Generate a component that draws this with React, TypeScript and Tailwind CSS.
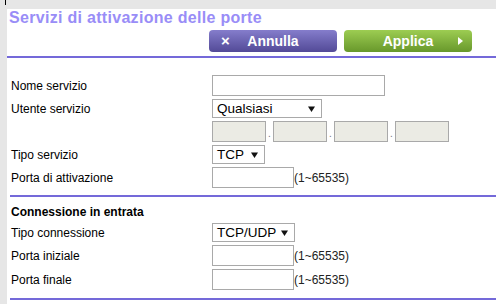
import React from "react";

const Arrow = () => (
    <svg width="7" height="6" viewBox="0 0 7 6" className="shrink-0">
        <path d="M0 0.5h7L3.5 6z" fill="#111" />
    </svg>
);

const Select = ({ value, width }: { value: string; width: string }) => (
    <div
        className={`flex h-[19px] items-center justify-between border border-[#a9a9a9] bg-white pl-[4px] pr-[6px] text-[13.5px] leading-none text-black ${width}`}
    >
        <span>{value}</span>
        <Arrow />
    </div>
);

const TextBox = ({ width, disabled = false }: { width: string; disabled?: boolean }) => (
    <div
        className={`h-[21px] border border-[#a9a9a9] ${disabled ? "bg-[#ebebe4]" : "bg-white"} ${width}`}
    />
);

const Row = ({ label, children, className = "" }: { label: string; children?: React.ReactNode; className?: string }) => (
    <div className={`flex items-center ${className}`}>
        <div className="w-[202px] shrink-0 pl-[1px] text-[12px] leading-[14px] text-black">{label}</div>
        <div className="flex items-center">{children}</div>
    </div>
);

const Range = () => <span className="text-[12px] leading-[14px] text-[#222]">(1~65535)</span>;

const IpDot = () => (
    <span className="flex h-[21px] w-[7px] items-end justify-center pb-[3px] text-[10px] leading-none text-[#777]">
        .
    </span>
);

export default function App() {
    return (
        <div className="h-[304px] w-[496px] overflow-hidden bg-[#e6e6e6] font-['Liberation_Sans',Arial,sans-serif]">
            {/* top strip */}
            <div className="h-[9px]">
                <div className="ml-[5px] h-[5px] w-px bg-black" />
            </div>

            <div className="ml-[7px] h-[295px] bg-white">
                <h1 className="pl-[2px] text-[16px] font-bold leading-[18px] tracking-[0.3px] text-[#998df7]">
                    Servizi di attivazione delle porte
                </h1>

                {/* buttons */}
                <div className="mt-[3px] flex gap-[7px] pl-[202px]">
                    <button className="relative flex h-[22px] w-[128px] items-center justify-center rounded-[4px] bg-linear-to-b from-[#857dcc] to-[#534a97] text-[14px] font-bold text-white">
                        <span className="absolute left-[12px] top-[2px] text-[15px] leading-[18px]">×</span>
                        Annulla
                    </button>
                    <button className="relative flex h-[22px] w-[128px] items-center justify-center rounded-[4px] bg-linear-to-b from-[#9dcd52] to-[#68982b] text-[14px] font-bold text-white">
                        Applica
                        <svg width="5" height="8" viewBox="0 0 5 8" className="absolute right-[9px] top-[7px]">
                            <path d="M0 0L5 4L0 8z" fill="#fff" />
                        </svg>
                    </button>
                </div>

                <div className="mt-[4px] h-[2px] bg-[#7469d9]" />

                {/* form */}
                <div className="pl-[3px]">
                    <Row label="Nome servizio" className="mt-[17px]">
                        <TextBox width="w-[173px]" />
                    </Row>
                    <Row label="Utente servizio" className="mt-[3px]">
                        <Select value="Qualsiasi" width="w-[110px]" />
                    </Row>
                    <Row label="" className="mt-[3px]">
                        <TextBox width="w-[54px]" disabled />
                        <IpDot />
                        <TextBox width="w-[54px]" disabled />
                        <IpDot />
                        <TextBox width="w-[54px]" disabled />
                        <IpDot />
                        <TextBox width="w-[54px]" disabled />
                    </Row>
                    <Row label="Tipo servizio" className="mt-[3px]">
                        <Select value="TCP" width="w-[53px]" />
                    </Row>
                    <Row label="Porta di attivazione" className="mt-[3px]">
                        <TextBox width="w-[82px]" />
                        <Range />
                    </Row>

                    <div className="mt-[7px] h-[2px] bg-[#7469d9]" />

                    <div className="mt-[8px] pl-[1px] text-[12px] font-bold leading-[14px] text-black">
                        Connessione in entrata
                    </div>
                    <Row label="Tipo connessione" className="mt-[4px]">
                        <Select value="TCP/UDP" width="w-[83px]" />
                    </Row>
                    <Row label="Porta iniziale" className="mt-[3px]">
                        <TextBox width="w-[82px]" />
                        <Range />
                    </Row>
                    <Row label="Porta finale" className="mt-[3px]">
                        <TextBox width="w-[82px]" />
                        <Range />
                    </Row>

                    <div className="mt-[8px] h-[2px] bg-[#7469d9]" />
                </div>
            </div>
        </div>
    );
}
